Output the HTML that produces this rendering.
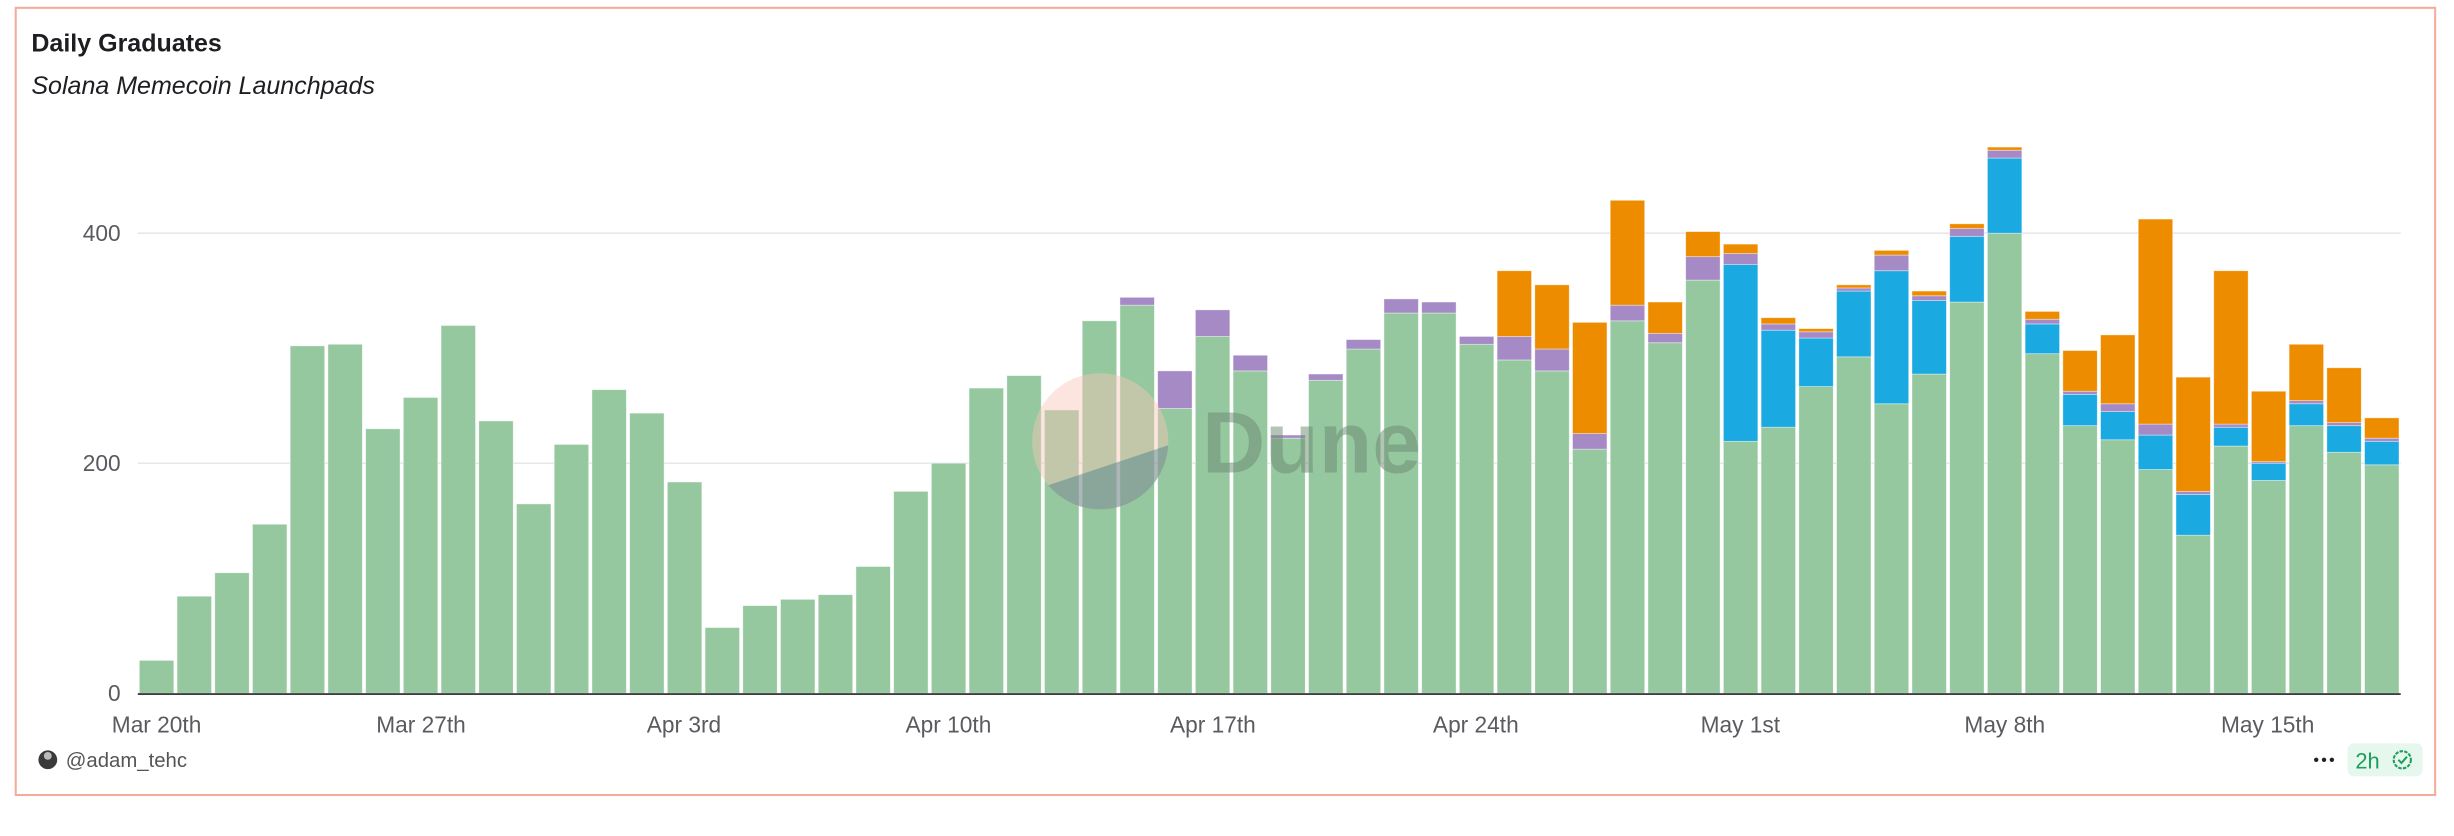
<!DOCTYPE html>
<html><head><meta charset="utf-8"><style>
html,body{margin:0;padding:0;background:#fff;width:2454px;height:836px;overflow:hidden}
svg{display:block}
text{font-family:"Liberation Sans",sans-serif}
.g{fill:#96c8a0}.p{fill:#a58ac6}.b{fill:#1aa9e0}.o{fill:#ee8c00}
.bars rect{stroke:#fff;stroke-opacity:.5;stroke-width:.5}
.ax{fill:#5a5a60;font-size:14.5px}
</style></head><body>
<svg width="2454" height="836" viewBox="0 0 1568 534.2">
<rect x="10" y="5" width="1546" height="503" fill="#fff" stroke="#f5ab9b" stroke-width="1.3"/>
<text x="20" y="33" font-size="16" font-weight="bold" fill="#1e1e22">Daily Graduates</text>
<text x="20" y="60" font-size="16" font-style="italic" fill="#1e1e22">Solana Memecoin Launchpads</text>
<line x1="88" y1="149" x2="1534" y2="149" stroke="#e6e7ea" stroke-width="1"/>
<line x1="88" y1="296" x2="1534" y2="296" stroke="#e6e7ea" stroke-width="1"/>
<text class="ax" x="77" y="154" text-anchor="end">400</text>
<text class="ax" x="77" y="301" text-anchor="end">200</text>
<text class="ax" x="77" y="448" text-anchor="end">0</text>
<g class="bars">
<rect class="g" x="89" y="422" width="22" height="21"/>
<rect class="g" x="113.1" y="381" width="22" height="62"/>
<rect class="g" x="137.2" y="366" width="22" height="77"/>
<rect class="g" x="161.3" y="335" width="22" height="108"/>
<rect class="g" x="185.4" y="221" width="22" height="222"/>
<rect class="g" x="209.5" y="220" width="22" height="223"/>
<rect class="g" x="233.6" y="274" width="22" height="169"/>
<rect class="g" x="257.7" y="254" width="22" height="189"/>
<rect class="g" x="281.8" y="208" width="22" height="235"/>
<rect class="g" x="305.9" y="269" width="22" height="174"/>
<rect class="g" x="330" y="322" width="22" height="121"/>
<rect class="g" x="354.1" y="284" width="22" height="159"/>
<rect class="g" x="378.2" y="249" width="22" height="194"/>
<rect class="g" x="402.3" y="264" width="22" height="179"/>
<rect class="g" x="426.4" y="308" width="22" height="135"/>
<rect class="g" x="450.5" y="401" width="22" height="42"/>
<rect class="g" x="474.6" y="387" width="22" height="56"/>
<rect class="g" x="498.7" y="383" width="22" height="60"/>
<rect class="g" x="522.8" y="380" width="22" height="63"/>
<rect class="g" x="546.9" y="362" width="22" height="81"/>
<rect class="g" x="571" y="314" width="22" height="129"/>
<rect class="g" x="595.1" y="296" width="22" height="147"/>
<rect class="g" x="619.2" y="248" width="22" height="195"/>
<rect class="g" x="643.3" y="240" width="22" height="203"/>
<rect class="g" x="667.4" y="262" width="22" height="181"/>
<rect class="g" x="691.5" y="205" width="22" height="238"/>
<rect class="g" x="715.6" y="195" width="22" height="248"/><rect class="p" x="715.6" y="190" width="22" height="5"/>
<rect class="g" x="739.7" y="261" width="22" height="182"/><rect class="p" x="739.7" y="237" width="22" height="24"/>
<rect class="g" x="763.8" y="215" width="22" height="228"/><rect class="p" x="763.8" y="198" width="22" height="17"/>
<rect class="g" x="787.9" y="237" width="22" height="206"/><rect class="p" x="787.9" y="227" width="22" height="10"/>
<rect class="g" x="812" y="280" width="22" height="163"/><rect class="p" x="812" y="278" width="22" height="2"/>
<rect class="g" x="836.1" y="243" width="22" height="200"/><rect class="p" x="836.1" y="239" width="22" height="4"/>
<rect class="g" x="860.2" y="223" width="22" height="220"/><rect class="p" x="860.2" y="217" width="22" height="6"/>
<rect class="g" x="884.3" y="200" width="22" height="243"/><rect class="p" x="884.3" y="191" width="22" height="9"/>
<rect class="g" x="908.4" y="200" width="22" height="243"/><rect class="p" x="908.4" y="193" width="22" height="7"/>
<rect class="g" x="932.5" y="220" width="22" height="223"/><rect class="p" x="932.5" y="215" width="22" height="5"/>
<rect class="g" x="956.6" y="230" width="22" height="213"/><rect class="p" x="956.6" y="215" width="22" height="15"/><rect class="o" x="956.6" y="173" width="22" height="42"/>
<rect class="g" x="980.7" y="237" width="22" height="206"/><rect class="p" x="980.7" y="223" width="22" height="14"/><rect class="o" x="980.7" y="182" width="22" height="41"/>
<rect class="g" x="1004.8" y="287" width="22" height="156"/><rect class="p" x="1004.8" y="277" width="22" height="10"/><rect class="o" x="1004.8" y="206" width="22" height="71"/>
<rect class="g" x="1028.9" y="205" width="22" height="238"/><rect class="p" x="1028.9" y="195" width="22" height="10"/><rect class="o" x="1028.9" y="128" width="22" height="67"/>
<rect class="g" x="1053" y="219" width="22" height="224"/><rect class="p" x="1053" y="213" width="22" height="6"/><rect class="o" x="1053" y="193" width="22" height="20"/>
<rect class="g" x="1077.1" y="179" width="22" height="264"/><rect class="p" x="1077.1" y="164" width="22" height="15"/><rect class="o" x="1077.1" y="148" width="22" height="16"/>
<rect class="g" x="1101.2" y="282" width="22" height="161"/><rect class="b" x="1101.2" y="169" width="22" height="113"/><rect class="p" x="1101.2" y="162" width="22" height="7"/><rect class="o" x="1101.2" y="156" width="22" height="6"/>
<rect class="g" x="1125.3" y="273" width="22" height="170"/><rect class="b" x="1125.3" y="211" width="22" height="62"/><rect class="p" x="1125.3" y="207" width="22" height="4"/><rect class="o" x="1125.3" y="203" width="22" height="4"/>
<rect class="g" x="1149.4" y="247" width="22" height="196"/><rect class="b" x="1149.4" y="216" width="22" height="31"/><rect class="p" x="1149.4" y="212" width="22" height="4"/><rect class="o" x="1149.4" y="210" width="22" height="2"/>
<rect class="g" x="1173.5" y="228" width="22" height="215"/><rect class="b" x="1173.5" y="186" width="22" height="42"/><rect class="p" x="1173.5" y="184" width="22" height="2"/><rect class="o" x="1173.5" y="182" width="22" height="2"/>
<rect class="g" x="1197.6" y="258" width="22" height="185"/><rect class="b" x="1197.6" y="173" width="22" height="85"/><rect class="p" x="1197.6" y="163" width="22" height="10"/><rect class="o" x="1197.6" y="160" width="22" height="3"/>
<rect class="g" x="1221.7" y="239" width="22" height="204"/><rect class="b" x="1221.7" y="192" width="22" height="47"/><rect class="p" x="1221.7" y="189" width="22" height="3"/><rect class="o" x="1221.7" y="186" width="22" height="3"/>
<rect class="g" x="1245.8" y="193" width="22" height="250"/><rect class="b" x="1245.8" y="151" width="22" height="42"/><rect class="p" x="1245.8" y="146" width="22" height="5"/><rect class="o" x="1245.8" y="143" width="22" height="3"/>
<rect class="g" x="1269.9" y="149" width="22" height="294"/><rect class="b" x="1269.9" y="101" width="22" height="48"/><rect class="p" x="1269.9" y="96" width="22" height="5"/><rect class="o" x="1269.9" y="94" width="22" height="2"/>
<rect class="g" x="1294" y="226" width="22" height="217"/><rect class="b" x="1294" y="207" width="22" height="19"/><rect class="p" x="1294" y="204" width="22" height="3"/><rect class="o" x="1294" y="199" width="22" height="5"/>
<rect class="g" x="1318.1" y="272" width="22" height="171"/><rect class="b" x="1318.1" y="252" width="22" height="20"/><rect class="p" x="1318.1" y="250" width="22" height="2"/><rect class="o" x="1318.1" y="224" width="22" height="26"/>
<rect class="g" x="1342.2" y="281" width="22" height="162"/><rect class="b" x="1342.2" y="263" width="22" height="18"/><rect class="p" x="1342.2" y="258" width="22" height="5"/><rect class="o" x="1342.2" y="214" width="22" height="44"/>
<rect class="g" x="1366.3" y="300" width="22" height="143"/><rect class="b" x="1366.3" y="278" width="22" height="22"/><rect class="p" x="1366.3" y="271" width="22" height="7"/><rect class="o" x="1366.3" y="140" width="22" height="131"/>
<rect class="g" x="1390.4" y="342" width="22" height="101"/><rect class="b" x="1390.4" y="316" width="22" height="26"/><rect class="p" x="1390.4" y="314" width="22" height="2"/><rect class="o" x="1390.4" y="241" width="22" height="73"/>
<rect class="g" x="1414.5" y="285" width="22" height="158"/><rect class="b" x="1414.5" y="273" width="22" height="12"/><rect class="p" x="1414.5" y="271" width="22" height="2"/><rect class="o" x="1414.5" y="173" width="22" height="98"/>
<rect class="g" x="1438.6" y="307" width="22" height="136"/><rect class="b" x="1438.6" y="296" width="22" height="11"/><rect class="p" x="1438.6" y="295" width="22" height="1"/><rect class="o" x="1438.6" y="250" width="22" height="45"/>
<rect class="g" x="1462.7" y="272" width="22" height="171"/><rect class="b" x="1462.7" y="258" width="22" height="14"/><rect class="p" x="1462.7" y="256" width="22" height="2"/><rect class="o" x="1462.7" y="220" width="22" height="36"/>
<rect class="g" x="1486.8" y="289" width="22" height="154"/><rect class="b" x="1486.8" y="272" width="22" height="17"/><rect class="p" x="1486.8" y="270" width="22" height="2"/><rect class="o" x="1486.8" y="235" width="22" height="35"/>
<rect class="g" x="1510.9" y="297" width="22" height="146"/><rect class="b" x="1510.9" y="282" width="22" height="15"/><rect class="p" x="1510.9" y="280" width="22" height="2"/><rect class="o" x="1510.9" y="267" width="22" height="13"/>
</g>
<line x1="88" y1="443.5" x2="1534" y2="443.5" stroke="#222" stroke-width="1"/>
<!-- watermark -->
<g opacity="0.75">
<clipPath id="c"><circle cx="703" cy="282" r="43.5"/></clipPath>
<circle cx="703" cy="282" r="43.5" fill="#f9c7b6" opacity="0.6"/>
<polygon clip-path="url(#c)" points="640,345 640,320 760,280 760,345" fill="#6e8a92" opacity="0.75"/>
</g>
<text x="768" y="302" font-size="56" font-weight="bold" fill="#6b8a72" opacity="0.5">Dune</text>
<g class="ax">
<text x="100" y="468" text-anchor="middle">Mar 20th</text>
<text x="269" y="468" text-anchor="middle">Mar 27th</text>
<text x="437" y="468" text-anchor="middle">Apr 3rd</text>
<text x="606" y="468" text-anchor="middle">Apr 10th</text>
<text x="775" y="468" text-anchor="middle">Apr 17th</text>
<text x="943" y="468" text-anchor="middle">Apr 24th</text>
<text x="1112" y="468" text-anchor="middle">May 1st</text>
<text x="1281" y="468" text-anchor="middle">May 8th</text>
<text x="1449" y="468" text-anchor="middle">May 15th</text>
</g>
<circle cx="30.5" cy="485.5" r="6" fill="#3a3a3a"/><circle cx="30.5" cy="483" r="2.5" fill="#bbb"/>
<text x="42" y="490" font-size="13" fill="#555">@adam_tehc</text>
<circle cx="1480" cy="485.5" r="1.4" fill="#222"/><circle cx="1485" cy="485.5" r="1.4" fill="#222"/><circle cx="1490" cy="485.5" r="1.4" fill="#222"/>
<rect x="1500" y="475" width="48" height="21" rx="4" fill="#e6f7ee"/>
<text x="1505" y="491" font-size="14" fill="#1aa05a">2h</text>
<circle cx="1535" cy="485.5" r="5.5" fill="none" stroke="#1aa05a" stroke-width="1.3" stroke-dasharray="2.2 0.8"/>
<path d="M1532.5 485.5 l2 2 l3.5 -4" fill="none" stroke="#1aa05a" stroke-width="1.3"/>
</svg>
</body></html>
